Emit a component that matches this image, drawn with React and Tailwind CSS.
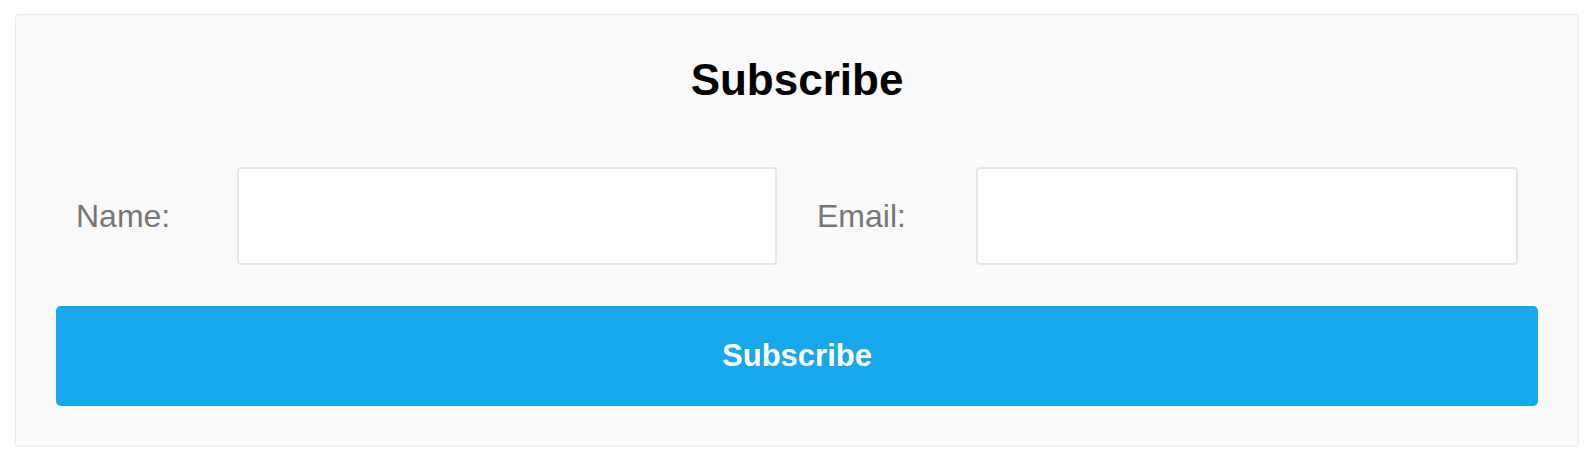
export default function App() {
  return (
    <div className="min-h-screen bg-white pt-[14px] pl-[15px] pr-[11px] font-['Liberation_Sans',Arial,sans-serif]">
      <form
        className="w-[1564px] bg-[#fafafa] border border-[#ebebeb] rounded-[4px] px-[40px] pt-[43px] pb-[40px]"
        onSubmit={(e) => e.preventDefault()}
      >
        <h2 className="text-center text-[44px] leading-[44px] font-bold text-black">Subscribe</h2>

        <div className="flex mt-[65px]">
          <div className="flex-1 flex items-center px-[20px]">
            <label className="w-[161px] text-[32px] text-[#777]">Name:</label>
            <input
              type="text"
              className="flex-1 h-[98px] bg-white border-2 border-[#e6e6e6] rounded-[4px] outline-none"
            />
          </div>
          <div className="flex-1 flex items-center px-[20px]">
            <label className="w-[159px] text-[32px] text-[#777]">Email:</label>
            <input
              type="email"
              className="flex-1 h-[98px] bg-white border-2 border-[#e6e6e6] rounded-[4px] outline-none"
            />
          </div>
        </div>

        <button
          type="submit"
          className="mt-[41px] w-full h-[100px] bg-[#16a8eb] rounded-[5px] text-white text-[31px] font-bold"
        >
          Subscribe
        </button>
      </form>
    </div>
  );
}
